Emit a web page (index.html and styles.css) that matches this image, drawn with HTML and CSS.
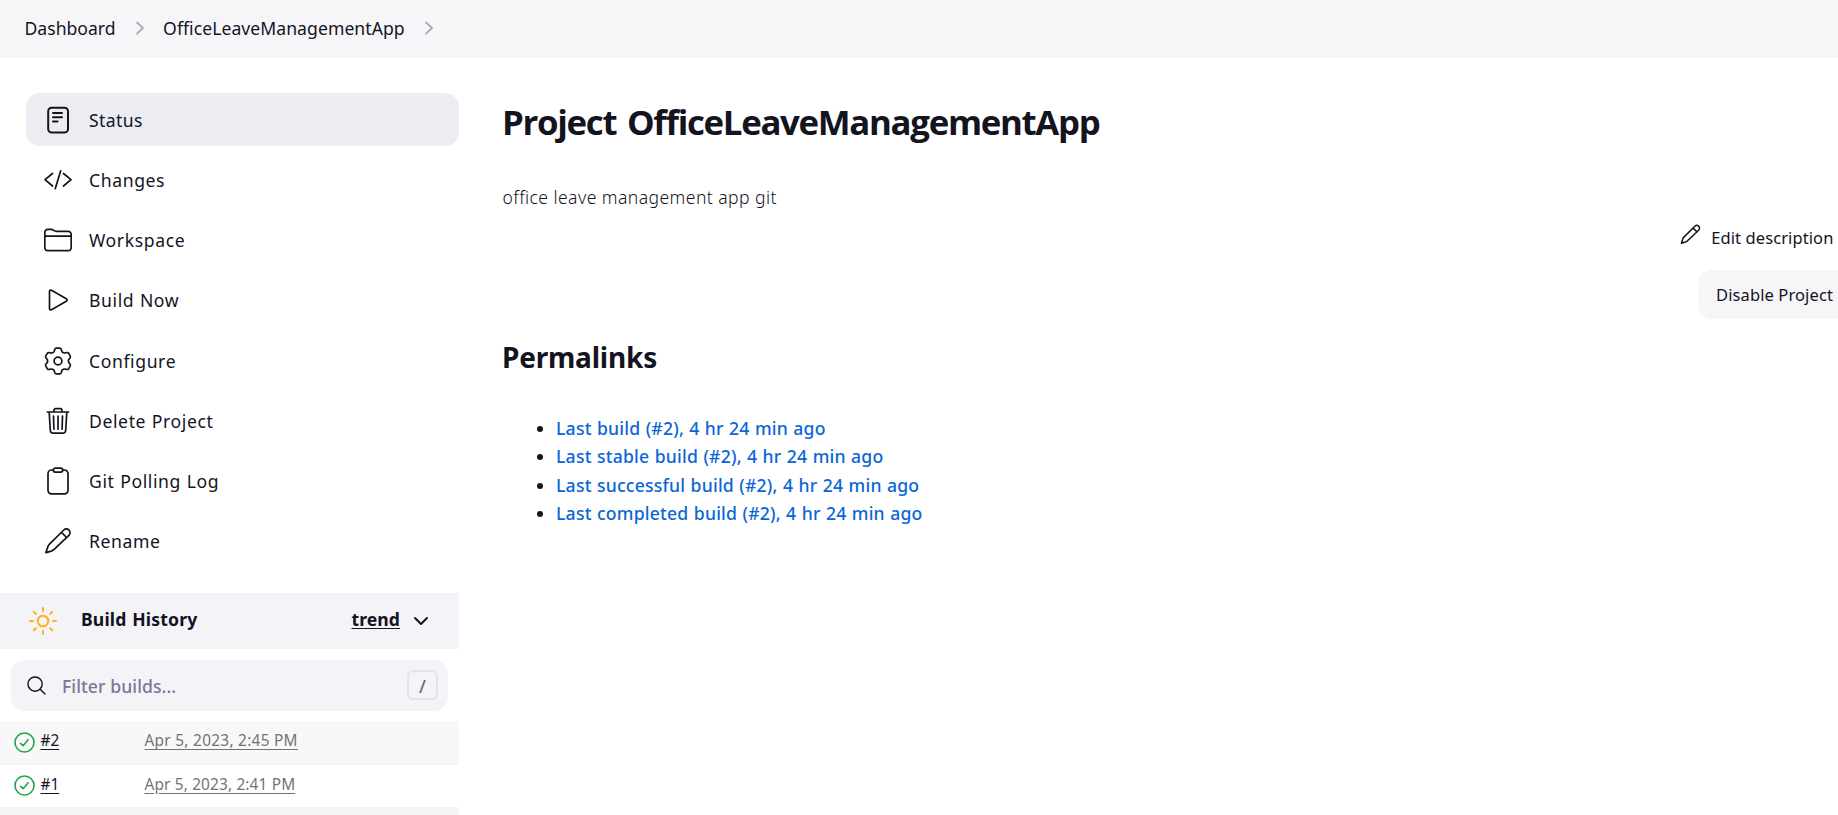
FILE: index.html
```
<!DOCTYPE html>
<html lang="en">
<head>
<meta charset="utf-8">
<title>OfficeLeaveManagementApp [Jenkins]</title>
<link rel="stylesheet" href="styles.css">
</head>
<body>
<nav class="breadcrumbs">
  <a class="crumb">Dashboard</a>
  <svg class="crumb-sep" viewBox="0 0 10 14"><path d="M2 1.500 8 7l-6 5.700"/></svg>
  <a class="crumb crumb-project">OfficeLeaveManagementApp</a>
  <svg class="crumb-sep" viewBox="0 0 10 14"><path d="M2 1.500 8 7l-6 5.700"/></svg>
</nav>
<div class="page">
  <aside class="sidebar">
    <div class="tasks">
      <a class="task task-active"><svg class="icon" viewBox="0 0 28 28"><rect x="4.200" y="1.700" width="19.800" height="24.800" rx="3.500" stroke-width="2"/><path d="M9 7h9M9 11.300h9M9 15.600h4.500" stroke-width="2"/></svg><span>Status</span></a>
      <a class="task"><svg class="icon" viewBox="0 0 28 28"><path d="M8.500 7.500 1 13.700l7.500 6.300M19.500 7.500 27 13.700 19.500 20M16.700 4.800 11.300 22.600"/></svg><span>Changes</span></a>
      <a class="task"><svg class="icon" viewBox="0 0 28 28"><path d="M.8 21.500V6.500A3 3 0 0 1 3.800 3.400h3.400c2.300 0 2.800 2 5 2h12a3 3 0 0 1 3 3v13.300a3 3 0 0 1-3 3H3.800a3 3 0 0 1-3-3zM.8 10.200h26.400"/></svg><span>Workspace</span></a>
      <a class="task"><svg class="icon" viewBox="0 0 28 28"><path d="M5.500 5.500v17c0 1.200 1 1.700 2 1.200l14.800-8.500c1-.6 1-1.800 0-2.400L7.500 4.300c-1-.5-2 0-2 1.200z"/></svg><span>Build Now</span></a>
      <a class="task"><svg class="icon" viewBox="0 0 28 28"><path d="M10.800 2.200Q11.200 1.200 12.300 1.200h3.400q1.100 0 1.500 1l.6 2.100q.4.900 1.300 1.200l.8.400q.8.200 1.500-.1l1.800-.3q1 0 1.500.8l1.500 2.600q.5 1-.1 1.800l-1.300 1.700q-.5.700-.4 1.600t.4 1.600l1.300 1.700q.6.800.1 1.800l-1.500 2.600q-.5.800-1.500.8l-1.800-.3q-.7-.3-1.500-.1l-.8.400q-.9.300-1.300 1.200l-.6 2.100q-.4 1-1.500 1h-3.400q-1.100 0-1.500-1l-.6-2.100q-.4-.9-1.300-1.200l-.8-.4q-.8-.2-1.500.1l-1.800.3q-1 0-1.500-.8l-1.500-2.600q-.5-1 .1-1.800l1.300-1.700q.5-.7.400-1.600t-.4-1.600l-1.300-1.700q-.6-.8-.1-1.800l1.500-2.600q.5-.8 1.500-.8l1.800.3q.7.300 1.500.1l.8-.4q.9-.3 1.300-1.200z"/><circle cx="14" cy="14" r="3.900"/></svg><span>Configure</span></a>
      <a class="task"><svg class="icon" viewBox="0 0 28 28"><path d="M5.200 5.400l1.100 17.800c.1 1.700 1.200 3 2.900 3h9.600c1.700 0 2.800-1.300 2.900-3l1.100-17.800M3.400 5h21.200M10 5V3.300c0-1 .7-1.700 1.700-1.700h4.600c1 0 1.700.7 1.700 1.700V5M14 9v13.200M9.500 9l.4 13.200M18.500 9l-.4 13.200"/></svg><span>Delete Project</span></a>
      <a class="task"><svg class="icon" viewBox="0 0 28 28"><path d="M18.500 3h2a3.500 3.500 0 0 1 3.500 3.500v16.800a3.500 3.500 0 0 1-3.500 3.500h-13A3.500 3.500 0 0 1 4 23.300V6.500A3.500 3.500 0 0 1 7.500 3h2"/><rect x="9.300" y="1.200" width="9.400" height="3.900" rx="1.900"/></svg><span>Git Polling Log</span></a>
      <a class="task"><svg class="icon" viewBox="0 0 28 28"><path d="M19.800 3 5.500 17.200c-1 1-1.500 1.900-1.900 3.200L1.900 25.600l5.400-1.500c1.200-.4 2.100-1 3.100-2L24.900 8.300M19.800 3a3.600 3.600 0 0 1 5.100 5.300M17.500 5.300l5.100 5.200"/></svg><span>Rename</span></a>
    </div>
    <section class="history">
      <header class="history-head">
        <svg class="sun" viewBox="0 0 28 28"><circle cx="14" cy="14" r="5.300"/><path d="M14 1v3M14 24v3M1 14h3M24 14h3M4.800 4.800l2 2M21.200 21.200l2 2M4.800 23.200l2-2M21.200 6.800l2-2"/></svg>
        <span class="history-title">Build History</span>
        <a class="trend">trend</a>
        <svg class="chevron" viewBox="0 0 16 10"><path d="m2 2 6 6 6-6"/></svg>
      </header>
      <div class="filter">
        <svg class="search" viewBox="0 0 20 20"><circle cx="8.500" cy="8.500" r="7.500"/><path d="m13.900 13.900 5 5"/></svg>
        <span class="filter-text">Filter builds...</span>
        <kbd class="key">/</kbd>
      </div>
      <div class="build build-odd">
        <svg class="ok" viewBox="0 0 21 21"><circle cx="10.500" cy="10.500" r="9.500"/><path d="m6.500 11.300 2.600 2.400 5-6"/></svg>
        <a class="num">#2</a><a class="date">Apr 5, 2023, 2:45 PM</a>
      </div>
      <div class="build">
        <svg class="ok" viewBox="0 0 21 21"><circle cx="10.500" cy="10.500" r="9.500"/><path d="m6.500 11.300 2.600 2.400 5-6"/></svg>
        <a class="num">#1</a><a class="date date-narrow">Apr 5, 2023, 2:41 PM</a>
      </div>
      <div class="history-foot"></div>
    </section>
  </aside>
  <main class="main">
    <h1 class="title">Project OfficeLeaveManagementApp</h1>
    <p class="desc">office leave management app git</p>
    <div class="actions">
      <a class="edit"><svg class="pencil" viewBox="0 0 28 28"><path d="M19.800 3 5.500 17.200c-1 1-1.500 1.900-1.900 3.200L1.900 25.600l5.400-1.500c1.200-.4 2.100-1 3.100-2L24.900 8.300M19.800 3a3.600 3.600 0 0 1 5.100 5.300M17.500 5.300l5.100 5.200"/></svg><span>Edit description</span></a>
      <button class="disable">Disable Project</button>
    </div>
    <h2 class="subtitle">Permalinks</h2>
    <ul class="links">
      <li><a>Last build (#2), 4 hr 24 min ago</a></li>
      <li><a>Last stable build (#2), 4 hr 24 min ago</a></li>
      <li><a>Last successful build (#2), 4 hr 24 min ago</a></li>
      <li><a>Last completed build (#2), 4 hr 24 min ago</a></li>
    </ul>
  </main>
</div>
</body>
</html>
```
FILE: styles.css
```
* { box-sizing: border-box; }
html, body { height: 100%; }
body {
  margin: 0;
  overflow: hidden;
  display: flex;
  flex-direction: column;
  background: #fff;
  color: #14141f;
  font: 400 17.6px/28.16px "Noto Sans", "Open Sans", sans-serif;
}
svg { display: block; flex: none; fill: none; stroke: currentColor; stroke-linecap: round; stroke-linejoin: round; }

.breadcrumbs {
  flex: none;
  height: 58px;
  padding: 0 0 2px 24.500px;
  display: flex;
  align-items: center;
  background: #f6f6f9;
}
.crumb { white-space: nowrap; }
.crumb-project { letter-spacing: .05px; }
.crumb-sep { width: 10px; height: 14px; margin: 0 18.500px 0 19px; stroke: #a9a9bb; stroke-width: 1.8; }

.page { flex: 1; min-height: 0; display: flex; overflow: hidden; }
.sidebar { flex: none; width: 459px; }
.tasks { padding: 35px 0 0 26px; display: flex; flex-direction: column; gap: 7.4px; }
.task {
  height: 52.8px;
  padding: 1px 0 0 18px;
  display: flex;
  align-items: center;
  gap: 17px;
  border-radius: 14px;
  letter-spacing: .6px;
  word-spacing: .5px;
  font-weight: 440;
}
.task-active { background: #ecedf3; letter-spacing: .38px; }
.icon { width: 28px; height: 28px; stroke-width: 1.7; }

.history { margin-top: 25.800px; }
.history-head {
  height: 56px;
  padding: 0 30px 0 29px;
  display: flex;
  align-items: center;
  background: #f3f3f8;
  font-weight: 700;
}
.sun { width: 28px; height: 28px; margin-right: 24px; stroke: #ffb31a; stroke-width: 2; }
.history-title { flex: 1; padding-bottom: 3px; letter-spacing: .15px; word-spacing: 1px; }
.trend { margin-right: 13px; padding-bottom: 3px; letter-spacing: .05px; text-decoration: underline; text-underline-offset: 2px; }
.chevron { width: 16px; height: 10px; stroke-width: 2; }

.filter {
  height: 51px;
  margin: 11px;
  padding: 0 10px 0 16px;
  display: flex;
  align-items: center;
  background: #f3f3f8;
  border-radius: 14px;
}
.search { width: 19px; height: 19px; stroke-width: 1.5; }
.filter-text { flex: 1; padding: 2px 0 0 16px; color: #7a7892; font-weight: 500; letter-spacing: .08px; }
.key {
  width: 31px;
  height: 30px;
  padding-top: 1px;
  display: flex;
  align-items: center;
  justify-content: center;
  border: 2px solid #e3e3ee;
  border-radius: 6px;
  color: #6a6885;
  font: 500 18px/24px "Noto Sans", sans-serif;
}

.build {
  height: 42.500px;
  padding: 0 0 3px 13.500px;
  display: flex;
  align-items: center;
  font-size: 15.400px;
}
.build-odd { height: 43px; padding-bottom: 4px; background: #f8f8f8; border: solid #f1f1f1; border-width: 1px 0; }
.ok { width: 21px; height: 21px; margin-top: 2px; stroke: #1ea64b; stroke-width: 1.6; }
.num { width: 110px; padding-left: 6px; text-decoration: underline; text-underline-offset: 3px; }
.date { color: #737373; letter-spacing: .28px; text-decoration: underline; text-underline-offset: 3px; }
.date-narrow { letter-spacing: .15px; }
.history-foot { height: 40px; background: #f3f3f8; }

.main { flex: 1; min-width: 0; padding: 37px 0 0 43px; }
.title { margin: 0; font: 700 34.800px/53px "Open Sans", "Noto Sans", sans-serif; letter-spacing: -1.310px; word-spacing: 3px; }
.desc { margin: 35px 0 0; font-weight: 300; letter-spacing: .42px; padding-left: .5px; }
.actions { display: flex; flex-direction: column; align-items: flex-end; margin-top: 12px; font-size: 16.500px; }
.edit { height: 28px; margin-right: 4.500px; display: flex; align-items: center; gap: 10.500px; letter-spacing: .1px; }
.edit span { padding-top: 2px; }
.pencil { width: 21px; height: 21px; margin-bottom: 6px; stroke-width: 2; }
.disable {
  width: 140px;
  height: 49px;
  margin: 19px 0 0;
  padding: 1px 0 0 18px;
  border: 0;
  border-radius: 14px 0 0 14px;
  background: #f6f6f9;
  color: inherit;
  font: inherit;
  letter-spacing: .11px;
  text-align: left;
  white-space: nowrap;
}
.subtitle { margin: 18px 0 0; font-size: 28px; line-height: 40px; font-weight: 700; letter-spacing: -.2px; }
.links { margin: 37px 0 0; padding-left: 54px; line-height: 28.300px; font-weight: 500; letter-spacing: .22px; word-spacing: .5px; }
.links a { color: #0a66d6; }
```
